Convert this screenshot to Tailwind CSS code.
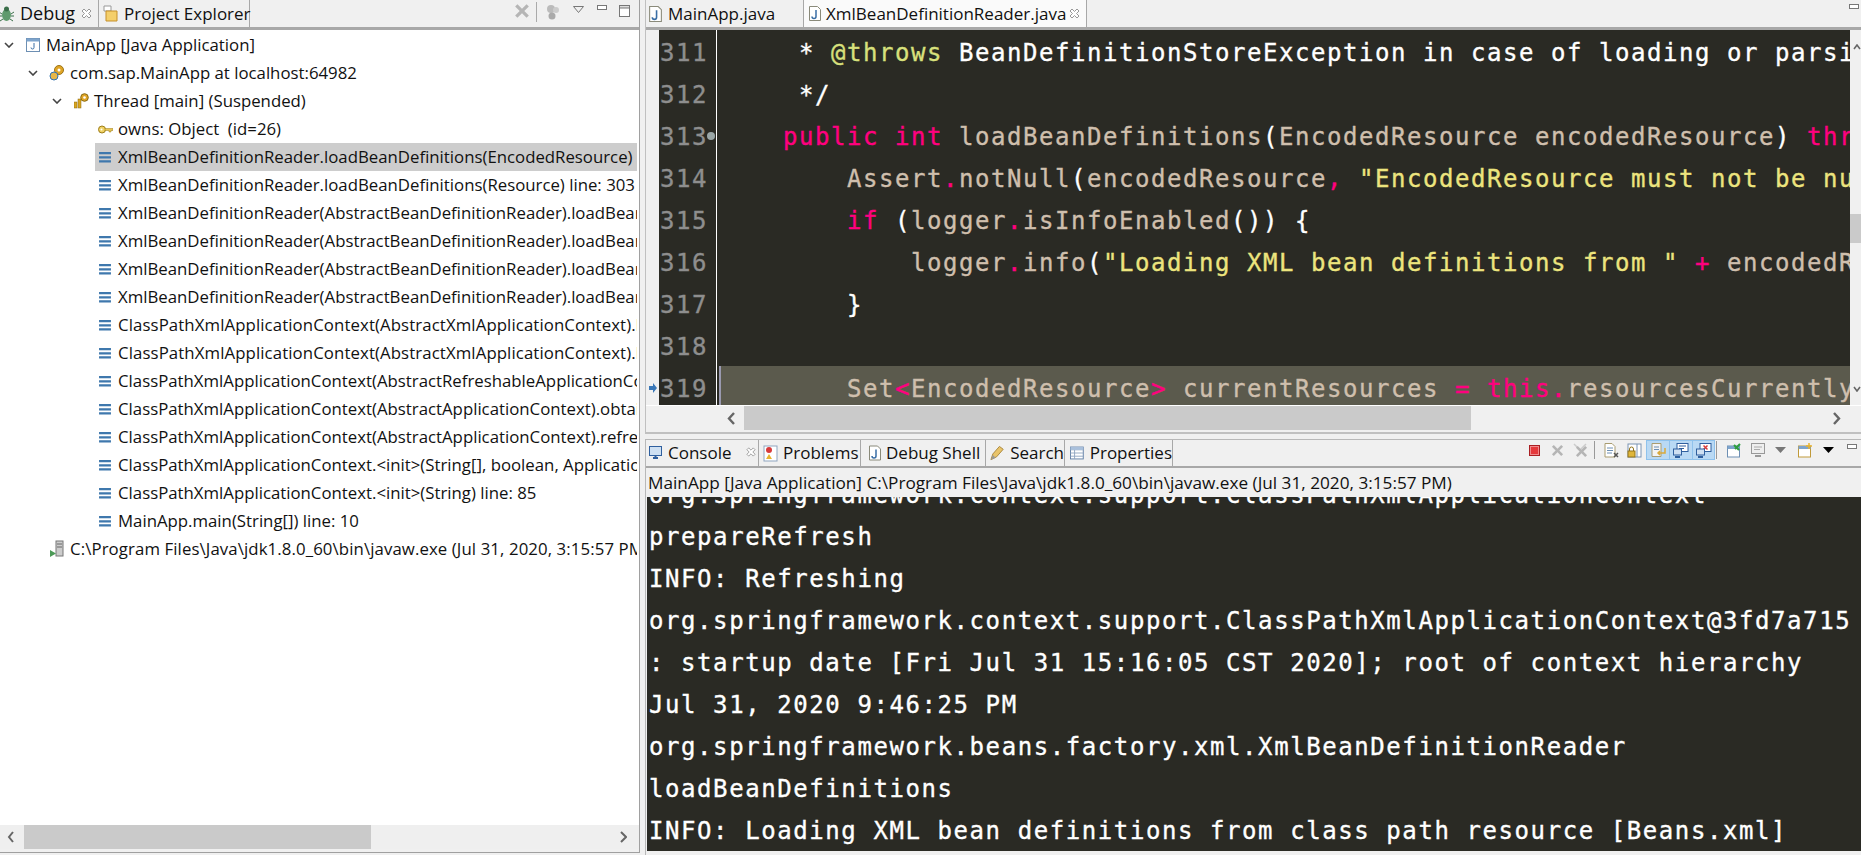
<!DOCTYPE html>
<html lang="en">
<head>
  <meta charset="UTF-8" />
  <title>Eclipse Debug</title>
  <script src="https://cdn.jsdelivr.net/npm/@tailwindcss/browser@4"></script>
</head>
<body class="w-[1861px] h-[855px] overflow-hidden bg-[#f0f0f0] text-[#111] font-['Open_Sans',sans-serif] text-[17px]">

  <!-- shared icons -->
  <svg class="hidden">
    <symbol id="stack" viewBox="0 0 13 12"><path d="M0 0h13v2.500H0zM0 4.500h13V7H0zM0 9h13v2.500H0z" fill="#3f78ad"/></symbol>
    <symbol id="chev" viewBox="0 0 10 6"><path d="M1 1l4 4 4-4" fill="none" stroke="#444" stroke-width="1.600"/></symbol>
    <symbol id="close" viewBox="0 0 11 11"><path d="M1 3l2-2 2.500 2.500L8 1l2 2-2.500 2.500L10 8l-2 2-2.500-2.500L3 10 1 8l2.500-2.500z" fill="#fff" stroke="#999"/></symbol>
    <symbol id="min" viewBox="0 0 10 6"><rect x=".5" y=".5" width="9" height="4" fill="#fff" stroke="#777"/></symbol>
    <symbol id="x" viewBox="0 0 14 14"><path d="M1 3l2-2 4 4 4-4 2 2-4 4 4 4-2 2-4-4-4 4-2-2 4-4z" fill="#b5b5b5"/></symbol>
    <symbol id="gear" viewBox="0 0 16 16"><circle cx="10" cy="5" r="4.500" fill="#e0a526" stroke="#9c7418"/><circle cx="5" cy="11" r="4" fill="#e6b74a" stroke="#2f72b5"/><circle cx="10" cy="5" r="1.500" fill="#fff"/></symbol>
    <symbol id="drop" viewBox="0 0 11 6"><path d="M0 0h11L5.500 6z" fill="currentColor"/></symbol>
    <symbol id="jfile" viewBox="0 0 12 15"><path d="M.5.500h8l3 3v11H.5z" fill="#fff" stroke="#8a8a7a"/><path d="M7 4v6.500a2 2 0 0 1-4 0" fill="none" stroke="#3a6ea5" stroke-width="1.500"/></symbol>
  </svg>

  <div class="flex h-[855px]">

    <!-- debug view -->
    <div class="w-[640px] h-[853px] flex flex-col border-r border-[#a0a0a0] border-b">
      <div class="h-[30px] shrink-0 flex border-b-[3px] border-[#a8a8a8] shadow-[inset_0_-1px_0_#f0f0f0] whitespace-nowrap text-[18px]">
        <div class="w-[98px] flex items-center relative bg-[#f0f0f0]">
          <svg class="w-[15px] h-[18px] -ml-[1px]" viewBox="0 0 15 18"><ellipse cx="7.500" cy="10" rx="4.500" ry="6" fill="#5f9a6d"/><circle cx="7.500" cy="4" r="2.500" fill="#3b6f4a"/><path d="M0 7l3 2M15 7l-3 2M0 11h3M15 11h-3M1 16l3-2M14 16l-3-2" stroke="#3b6f4a"/></svg>
          <span class="ml-[6px]">Debug</span>
          <svg class="w-[11px] h-[11px] absolute left-[81px] top-[8px]"><use href="#close"/></svg>
        </div>
        <div class="w-[152px] flex items-center border-x border-[#a8a8a8] pl-[4px]">
          <svg class="w-[15px] h-[18px] shrink-0" viewBox="0 0 15 18"><path d="M1 1h7v5H1z" fill="#fff" stroke="#999"/><path d="M3 6h11v10H3z" fill="#f4cf6b" stroke="#c58f2a"/></svg>
          <span class="ml-[6px] text-[17px]">Project Explorer</span>
        </div>
        <div class="flex items-start pt-[2px] ml-[264px]">
          <svg class="w-[16px] h-[18px]" viewBox="0 0 14 14"><use href="#x"/></svg>
          <div class="w-px h-[20px] bg-[#aaa] ml-[6px]"></div>
          <svg class="w-[14px] h-[16px] ml-[9px] mt-[2px]" viewBox="0 0 14 16"><circle cx="5" cy="5" r="4" fill="#bbb"/><circle cx="10" cy="6" r="3" fill="#ccc"/><circle cx="6" cy="12" r="3.500" fill="#aaa"/></svg>
          <svg class="w-[11px] h-[7px] ml-[13px] mt-[4px]" viewBox="0 0 11 7"><path d="M.5.500h10L5.500 6.500z" fill="#f0f0f0" stroke="#777"/></svg>
          <svg class="w-[10px] h-[6px] ml-[13px] mt-[3px]"><use href="#min"/></svg>
          <svg class="w-[11px] h-[12px] ml-[12px] mt-[3px]" viewBox="0 0 11 12"><rect x=".5" y=".5" width="10" height="11" fill="#fff" stroke="#777"/><rect x=".5" y=".5" width="10" height="2.500" fill="#ddd" stroke="#777"/></svg>
        </div>
      </div>

      <div class="flex-1 bg-white pt-[1px] overflow-hidden pr-[2px] whitespace-nowrap leading-[28px] text-[16.8px]">
        <div class="h-[28px] flex items-center pl-[4px] overflow-hidden">
          <svg class="w-[10px] h-[6px] shrink-0"><use href="#chev"/></svg>
          <svg class="w-[14px] h-[14px] shrink-0 ml-[12px]" viewBox="0 0 14 14"><rect x=".5" y=".5" width="13" height="13" fill="#fff" stroke="#6d8fb3"/><rect x=".5" y=".5" width="13" height="3" fill="#7ea4cc"/><path d="M8 5v4.500a1.500 1.500 0 0 1-3 0" fill="none" stroke="#3a6ea5"/></svg>
          <span class="ml-[6px]">MainApp [Java Application]</span>
        </div>
        <div class="h-[28px] flex items-center pl-[28px] overflow-hidden">
          <svg class="w-[10px] h-[6px] shrink-0"><use href="#chev"/></svg>
          <svg class="w-[16px] h-[16px] shrink-0 ml-[11px]"><use href="#gear"/></svg>
          <span class="ml-[5px]">com.sap.MainApp at localhost:64982</span>
        </div>
        <div class="h-[28px] flex items-center pl-[52px] overflow-hidden">
          <svg class="w-[10px] h-[6px] shrink-0"><use href="#chev"/></svg>
          <svg class="w-[15px] h-[16px] shrink-0 ml-[12px]" viewBox="0 0 15 16"><rect x="0" y="9" width="3" height="6" fill="#d9a520" stroke="#8a6a10" stroke-width=".5"/><rect x="4" y="6" width="3" height="9" fill="#d9a520" stroke="#8a6a10" stroke-width=".5"/><circle cx="10.500" cy="4.500" r="3.800" fill="#e0a526" stroke="#8a6a10"/><circle cx="10.500" cy="4.500" r="1.300" fill="#fff"/></svg>
          <span class="ml-[5px]">Thread [main] (Suspended)</span>
        </div>
        <div class="h-[28px] flex items-center pl-[98px] overflow-hidden">
          <svg class="w-[15px] h-[9px] shrink-0" viewBox="0 0 15 9"><circle cx="4" cy="4.500" r="3.500" fill="#f0d264" stroke="#9c7d18"/><path d="M7 3.500h8v2h-2v1.500h-2V5.500H7z" fill="#e8c654" stroke="#9c7d18" stroke-width=".5"/><circle cx="3.500" cy="4.500" r="1" fill="#fff"/></svg>
          <span class="ml-[5px] whitespace-pre">owns: Object  (id=26)</span>
        </div>
        <div class="h-[28px] flex items-center pl-[4px] ml-[95px] w-[542px] bg-[#cdcdcd] overflow-hidden">
          <svg class="w-[12px] h-[11px] shrink-0"><use href="#stack"/></svg>
          <span class="ml-[7px]">XmlBeanDefinitionReader.loadBeanDefinitions(EncodedResource) line: 319</span>
        </div>
        <div class="h-[28px] flex items-center pl-[99px] overflow-hidden"><svg class="w-[12px] h-[11px] shrink-0"><use href="#stack"/></svg><span class="ml-[7px]">XmlBeanDefinitionReader.loadBeanDefinitions(Resource) line: 303</span></div>
        <div class="h-[28px] flex items-center pl-[99px] overflow-hidden"><svg class="w-[12px] h-[11px] shrink-0"><use href="#stack"/></svg><span class="ml-[7px]">XmlBeanDefinitionReader(AbstractBeanDefinitionReader).loadBeanDefinitions(Resource...) line: 180</span></div>
        <div class="h-[28px] flex items-center pl-[99px] overflow-hidden"><svg class="w-[12px] h-[11px] shrink-0"><use href="#stack"/></svg><span class="ml-[7px]">XmlBeanDefinitionReader(AbstractBeanDefinitionReader).loadBeanDefinitions(String, Set) line: 216</span></div>
        <div class="h-[28px] flex items-center pl-[99px] overflow-hidden"><svg class="w-[12px] h-[11px] shrink-0"><use href="#stack"/></svg><span class="ml-[7px]">XmlBeanDefinitionReader(AbstractBeanDefinitionReader).loadBeanDefinitions(String) line: 187</span></div>
        <div class="h-[28px] flex items-center pl-[99px] overflow-hidden"><svg class="w-[12px] h-[11px] shrink-0"><use href="#stack"/></svg><span class="ml-[7px]">XmlBeanDefinitionReader(AbstractBeanDefinitionReader).loadBeanDefinitions(String...) line: 252</span></div>
        <div class="h-[28px] flex items-center pl-[99px] overflow-hidden"><svg class="w-[12px] h-[11px] shrink-0"><use href="#stack"/></svg><span class="ml-[7px] tracking-[0.1px]">ClassPathXmlApplicationContext(AbstractXmlApplicationContext).loadBeanDefinitions(XmlBeanDefinitionReader)</span></div>
        <div class="h-[28px] flex items-center pl-[99px] overflow-hidden"><svg class="w-[12px] h-[11px] shrink-0"><use href="#stack"/></svg><span class="ml-[7px] tracking-[0.1px]">ClassPathXmlApplicationContext(AbstractXmlApplicationContext).loadBeanDefinitions(DefaultListableBeanFactory)</span></div>
        <div class="h-[28px] flex items-center pl-[99px] overflow-hidden"><svg class="w-[12px] h-[11px] shrink-0"><use href="#stack"/></svg><span class="ml-[7px]">ClassPathXmlApplicationContext(AbstractRefreshableApplicationContext).refreshBeanFactory()</span></div>
        <div class="h-[28px] flex items-center pl-[99px] overflow-hidden"><svg class="w-[12px] h-[11px] shrink-0"><use href="#stack"/></svg><span class="ml-[7px]">ClassPathXmlApplicationContext(AbstractApplicationContext).obtainFreshBeanFactory() line: 623</span></div>
        <div class="h-[28px] flex items-center pl-[99px] overflow-hidden"><svg class="w-[12px] h-[11px] shrink-0"><use href="#stack"/></svg><span class="ml-[7px]">ClassPathXmlApplicationContext(AbstractApplicationContext).refresh() line: 521</span></div>
        <div class="h-[28px] flex items-center pl-[99px] overflow-hidden"><svg class="w-[12px] h-[11px] shrink-0"><use href="#stack"/></svg><span class="ml-[7px]">ClassPathXmlApplicationContext.&lt;init&gt;(String[], boolean, ApplicationContext) line: 139</span></div>
        <div class="h-[28px] flex items-center pl-[99px] overflow-hidden"><svg class="w-[12px] h-[11px] shrink-0"><use href="#stack"/></svg><span class="ml-[7px]">ClassPathXmlApplicationContext.&lt;init&gt;(String) line: 85</span></div>
        <div class="h-[28px] flex items-center pl-[99px] overflow-hidden"><svg class="w-[12px] h-[11px] shrink-0"><use href="#stack"/></svg><span class="ml-[7px]">MainApp.main(String[]) line: 10</span></div>
        <div class="h-[28px] flex items-center pl-[50px] overflow-hidden">
          <svg class="w-[14px] h-[18px] shrink-0" viewBox="0 0 14 18"><rect x="6" y="1" width="7" height="15" fill="#ccc" stroke="#777"/><path d="M7 4h5M7 7h5" stroke="#666"/><path d="M0 10l6 3.500L0 17z" fill="#4c9a57"/></svg>
          <span class="ml-[6px] tracking-[0.1px]">C:\Program Files\Java\jdk1.8.0_60\bin\javaw.exe (Jul 31, 2020, 3:15:57 PM)</span>
        </div>
      </div>

      <div class="h-[24px] shrink-0 mb-[3px] bg-[#efefef] flex items-center">
        <svg class="w-[8px] h-[12px] ml-[7px]" viewBox="0 0 8 12"><path d="M6 1L2 6l4 5" fill="none" stroke="#666" stroke-width="2"/></svg>
        <div class="w-[347px] h-[24px] bg-[#cacaca] ml-[9px]"></div>
        <svg class="w-[8px] h-[12px] ml-[248px]" viewBox="0 0 8 12"><path d="M2 1l5 5-5 5" fill="none" stroke="#666" stroke-width="2"/></svg>
      </div>
    </div>

    <!-- right side -->
    <div class="ml-[5px] w-[1216px] flex flex-col">

      <!-- editor -->
      <div class="h-[434px] shrink-0 flex flex-col border-l border-b-2 border-[#c0c0c0]">
        <div class="h-[30px] shrink-0 flex border-b-[3px] border-[#a8a8a8] whitespace-nowrap">
          <div class="w-[157px] flex items-center pl-[3px]">
            <svg class="w-[13px] h-[16px] shrink-0"><use href="#jfile"/></svg>
            <span class="ml-[6px]">MainApp.java</span>
          </div>
          <div class="w-[284px] flex items-center pl-[5px] bg-[#fafafa] border-x border-[#a8a8a8] relative">
            <svg class="w-[12px] h-[15px] shrink-0"><use href="#jfile"/></svg>
            <span class="ml-[5px]">XmlBeanDefinitionReader.java</span>
            <svg class="w-[11px] h-[11px] absolute left-[265px] top-[8px]"><use href="#close"/></svg>
          </div>
          <svg class="w-[10px] h-[6px] ml-[762px] mt-[4px]"><use href="#min"/></svg>
        </div>

        <div class="h-[375px] shrink-0 flex overflow-hidden font-['DejaVu_Sans_Mono',monospace] text-[24px] tracking-[1.55px] leading-[42px] [-webkit-text-stroke:0.35px]">
          <div class="w-[13px] shrink-0 relative">
            <svg class="w-[8px] h-[10px] absolute left-[3px] top-[353px]" viewBox="0 0 8 10"><path d="M0 3h4V0l4 5-4 5V7H0z" fill="#3a78b8"/></svg>
          </div>
          <div class="w-[58px] shrink-0 bg-[#2a2a24] text-[#8e8e8e] border-r border-white relative pt-[2px]">
            <div class="pl-[1px]">311</div><div class="pl-[1px]">312</div><div class="pl-[1px]">313</div><div class="pl-[1px]">314</div><div class="pl-[1px]">315</div><div class="pl-[1px]">316</div><div class="pl-[1px]">317</div><div class="pl-[1px]">318</div><div class="pl-[1px]">319</div>
            <div class="w-[8px] h-[8px] rounded-full bg-[#9aa6a6] absolute left-[48px] top-[102px]"></div>
          </div>
          <div class="w-[1133px] shrink-0 bg-[#2a2a24] text-[#cfbfad] overflow-hidden pt-[2px]">
            <div class="whitespace-pre pl-[2px] text-white">     * <span class="text-[#d8e07c]">@throws</span> BeanDefinitionStoreException in case of loading or parsing errors</div>
            <div class="whitespace-pre pl-[2px] text-white">     */</div>
            <div class="whitespace-pre pl-[2px]">    <span class="text-[#ff007f]">public</span> <span class="text-[#ff007f]">int</span> loadBeanDefinitions<span class="text-white">(</span>EncodedResource encodedResource<span class="text-white">)</span> <span class="text-[#ff007f]">throws</span> BeanDefinitionStoreException {</div>
            <div class="whitespace-pre pl-[2px]">        Assert<span class="text-[#ff007f]">.</span>notNull<span class="text-white">(</span>encodedResource<span class="text-[#ff007f]">,</span> <span class="text-[#ece47e]">"EncodedResource must not be null"</span><span class="text-white">);</span></div>
            <div class="whitespace-pre pl-[2px]">        <span class="text-[#ff007f]">if</span> <span class="text-white">(</span>logger<span class="text-[#ff007f]">.</span>isInfoEnabled<span class="text-white">()) {</span></div>
            <div class="whitespace-pre pl-[2px]">            logger<span class="text-[#ff007f]">.</span>info<span class="text-white">(</span><span class="text-[#ece47e]">"Loading XML bean definitions from "</span> <span class="text-[#ff007f]">+</span> encodedResource<span class="text-white">);</span></div>
            <div class="whitespace-pre pl-[2px] text-white">        }</div>
            <div class="pl-[2px]">&nbsp;</div>
            <div class="whitespace-pre h-[39px] -mt-[2px] pt-[2px] leading-[42px] ml-[2px] bg-[#5b5a4d] border-l-[2px] border-[#9a9ab0] -indent-[2px]">        Set<span class="text-[#ff007f]">&lt;</span>EncodedResource<span class="text-[#ff007f]">&gt;</span> currentResources <span class="text-[#ff007f]">=</span> <span class="text-[#ff007f]">this.</span>resourcesCurrentlyBeingLoaded<span class="text-[#ff007f]">.</span>get<span class="text-white">();</span></div>
          </div>
          <div class="w-[11px] shrink-0 relative">
            <svg class="w-[8px] h-[6px] absolute left-[3px] top-[14px]" viewBox="0 0 8 6"><path d="M1 5l3-4 3 4" fill="none" stroke="#666" stroke-width="1.600"/></svg>
            <div class="absolute inset-x-0 top-[184px] h-[29px] bg-[#cacaca]"></div>
            <svg class="w-[8px] h-[6px] absolute left-[3px] top-[356px]" viewBox="0 0 8 6"><path d="M1 1l3 4 3-4" fill="none" stroke="#666" stroke-width="1.600"/></svg>
          </div>
        </div>
        <div class="h-[1px] shrink-0 bg-white"></div>
        <div class="h-[24px] shrink-0 flex items-center">
          <svg class="w-[9px] h-[13px] ml-[81px]" viewBox="0 0 9 13"><path d="M7 1L2 6.500 7 12" fill="none" stroke="#666" stroke-width="2.400"/></svg>
          <div class="w-[727px] h-[24px] bg-[#cacaca] ml-[8px]"></div>
          <svg class="w-[9px] h-[13px] ml-[361px]" viewBox="0 0 9 13"><path d="M2 1l5 5.500L2 12" fill="none" stroke="#666" stroke-width="2.400"/></svg>
        </div>
      </div>

      <!-- console -->
      <div class="mt-[5px] flex-1 flex flex-col border-l border-t border-[#b8b8b8] min-h-0">
        <div class="h-[28px] shrink-0 flex border-b-2 border-[#a8a8a8] whitespace-nowrap">
          <div class="w-[112px] flex items-center pl-[3px] relative">
            <svg class="w-[13px] h-[14px]" viewBox="0 0 13 14"><rect x=".5" y=".5" width="12" height="9" fill="#cfe0f2" stroke="#2f5f9e"/><path d="M4 12h5M6.500 10v2" stroke="#2f5f9e" stroke-width="2"/></svg>
            <span class="ml-[6px]">Console</span>
            <svg class="w-[10px] h-[10px] absolute left-[100px] top-[7px]"><use href="#close"/></svg>
          </div>
          <div class="w-[103px] flex items-center pl-[4px] border-x border-[#a8a8a8]">
            <svg class="w-[15px] h-[17px]" viewBox="0 0 15 17"><rect x="1" y="1" width="13" height="15" fill="#fff" stroke="#8fa5bf"/><circle cx="6" cy="5" r="3" fill="#d83a3a"/><path d="M3 14l3-5 3 5z" fill="#e8b32f"/></svg>
            <span class="ml-[5px]">Problems</span>
          </div>
          <div class="w-[125px] flex items-center pl-[8px] border-r border-[#a8a8a8]">
            <svg class="w-[12px] h-[16px]"><use href="#jfile"/></svg>
            <span class="ml-[5px]">Debug Shell</span>
          </div>
          <div class="w-[79px] flex items-center pl-[4px] border-r border-[#a8a8a8]">
            <svg class="w-[15px] h-[17px]" viewBox="0 0 15 17"><path d="M1 15l2-6 7-8 4 3-7 8z" fill="#e9c46a" stroke="#a9863a"/><path d="M1 15l2-5 3 3z" fill="#999"/></svg>
            <span class="ml-[6px]">Search</span>
          </div>
          <div class="w-[108px] flex items-center pl-[5px] border-r border-[#a8a8a8]">
            <svg class="w-[15px] h-[14px]" viewBox="0 0 15 14"><rect x=".5" y=".5" width="14" height="13" fill="#fff" stroke="#5b7ba3"/><path d="M.5 3.500h14M.5 7h14M.5 10.500h14M5 3.500v10" stroke="#8fa5bf"/><rect x=".5" y=".5" width="14" height="3" fill="#a9c0dc"/></svg>
            <span class="ml-[6px]">Properties</span>
          </div>
          <!-- console toolbar -->
          <div class="flex items-center h-[20px] ml-[356px]">
            <div class="w-[11px] h-[11px] bg-[#e5383b] border border-[#a91e22] shadow-[inset_0_0_0_1px_#f08a8c]"></div>
            <svg class="w-[13px] h-[13px] ml-[11px]"><use href="#x"/></svg>
            <svg class="w-[15px] h-[15px] ml-[9px]" viewBox="0 0 15 15"><path d="M1 1l6 6 6-6" fill="none" stroke="#ccc" stroke-width="1.500"/><g transform="translate(2 2)"><use href="#x" width="13" height="13"/></g></svg>
            <div class="w-px h-[18px] bg-[#999] ml-[6px]"></div>
            <svg class="w-[15px] h-[15px] ml-[9px]" viewBox="0 0 15 15"><path d="M1 .500h7l3 3V14H1z" fill="#fff" stroke="#a99c70"/><path d="M3 5h6M3 7.500h6M3 10h5" stroke="#6d8fb3"/><path d="M10 10l4 4m0-4l-4 4" stroke="#555" stroke-width="1.500"/></svg>
            <svg class="w-[15px] h-[15px] ml-[8px]" viewBox="0 0 15 15"><rect x="1" y="1" width="13" height="13" fill="#fff" stroke="#7a93b2"/><path d="M10 1v13" stroke="#7a93b2"/><rect x="1" y="8" width="7" height="6" fill="#e0b63a" stroke="#93741b"/><path d="M2.500 8V6a2 2 0 0 1 4 0v2" fill="none" stroke="#93741b"/></svg>
            <div class="ml-[4px] flex h-[20px] bg-[#b9d9f4] border border-[#8fc2ec]">
              <div class="w-[23px] flex items-center justify-center border-r border-[#8fc2ec]"><svg class="w-[15px] h-[15px]" viewBox="0 0 15 15"><path d="M1 .500h9v13H1z" fill="#f4f4f4" stroke="#a99c70"/><path d="M3 4h5M3 6.500h5" stroke="#6d8fb3"/><path d="M14 5v5H7m2-2l-2 2 2 2" fill="none" stroke="#d9a93a" stroke-width="1.500"/></svg></div>
              <div class="w-[23px] flex items-center justify-center border-r border-[#8fc2ec]"><svg class="w-[16px] h-[15px]" viewBox="0 0 16 15"><rect x="4" y=".5" width="11" height="8" fill="#fff" stroke="#2f5f9e"/><path d="M6 3h7M6 5.500h5" stroke="#2f5f9e"/><rect x=".5" y="6" width="8" height="6" fill="#cfe0f2" stroke="#2f5f9e"/><path d="M2 14h5" stroke="#2f5f9e" stroke-width="2"/></svg></div>
              <div class="w-[21px] flex items-center justify-center"><svg class="w-[16px] h-[15px]" viewBox="0 0 16 15"><rect x="4" y=".5" width="11" height="8" fill="#fff" stroke="#2f5f9e"/><path d="M7.500 2.500l4 4m0-4l-4 4" stroke="#d83a3a" stroke-width="1.500"/><rect x=".5" y="6" width="8" height="6" fill="#cfe0f2" stroke="#2f5f9e"/><path d="M2 14h5" stroke="#2f5f9e" stroke-width="2"/></svg></div>
            </div>
            <div class="w-px h-[18px] bg-[#999] ml-[1px]"></div>
            <svg class="w-[14px] h-[15px] ml-[10px]" viewBox="0 0 14 15"><rect x=".5" y="3" width="12" height="11" fill="#fff" stroke="#6d8fb3"/><rect x=".5" y="3" width="12" height="3" fill="#7ea4cc"/><path d="M8 6l5-5M7 2l5 5" stroke="#2e9e3f" stroke-width="2"/></svg>
            <svg class="w-[14px] h-[15px] ml-[10px]" viewBox="0 0 14 15"><rect x=".5" y=".5" width="13" height="10" fill="#eee" stroke="#999"/><path d="M3 4h8M3 6.500h6" stroke="#aaa"/><path d="M4 13h6" stroke="#999" stroke-width="2"/></svg>
            <svg class="w-[11px] h-[6px] ml-[10px] text-[#777]"><use href="#drop"/></svg>
            <svg class="w-[15px] h-[15px] ml-[12px]" viewBox="0 0 15 15"><rect x=".5" y="3" width="12" height="11" fill="#fff" stroke="#c09a3a"/><rect x=".5" y="3" width="12" height="3" fill="#7ea4cc"/><path d="M11 0v6M8 3h6" stroke="#e8b32f" stroke-width="1.500"/></svg>
            <svg class="w-[11px] h-[6px] ml-[10px] text-black"><use href="#drop"/></svg>
            <svg class="w-[10px] h-[6px] ml-[13px] -mt-[6px]"><use href="#min"/></svg>
          </div>
        </div>
        <div class="h-[29px] shrink-0 flex items-center pl-[2px] text-[17.2px] whitespace-nowrap">MainApp [Java Application] C:\Program Files\Java\jdk1.8.0_60\bin\javaw.exe (Jul 31, 2020, 3:15:57 PM)</div>
        <div class="ml-[1px] h-[354px] bg-[#2a2a24] text-white overflow-hidden font-['DejaVu_Sans_Mono',monospace] text-[24px] tracking-[1.58px] leading-[42px] pl-[2px] [-webkit-text-stroke:0.35px]">
          <div class="whitespace-pre -mt-[23px]">org.springframework.context.support.ClassPathXmlApplicationContext</div>
          <div class="whitespace-pre">prepareRefresh</div>
          <div class="whitespace-pre">INFO: Refreshing</div>
          <div class="whitespace-pre">org.springframework.context.support.ClassPathXmlApplicationContext@3fd7a715</div>
          <div class="whitespace-pre">: startup date [Fri Jul 31 15:16:05 CST 2020]; root of context hierarchy</div>
          <div class="whitespace-pre">Jul 31, 2020 9:46:25 PM</div>
          <div class="whitespace-pre">org.springframework.beans.factory.xml.XmlBeanDefinitionReader</div>
          <div class="whitespace-pre">loadBeanDefinitions</div>
          <div class="whitespace-pre">INFO: Loading XML bean definitions from class path resource [Beans.xml]</div>
        </div>
      </div>
    </div>
  </div>
</body>
</html>
